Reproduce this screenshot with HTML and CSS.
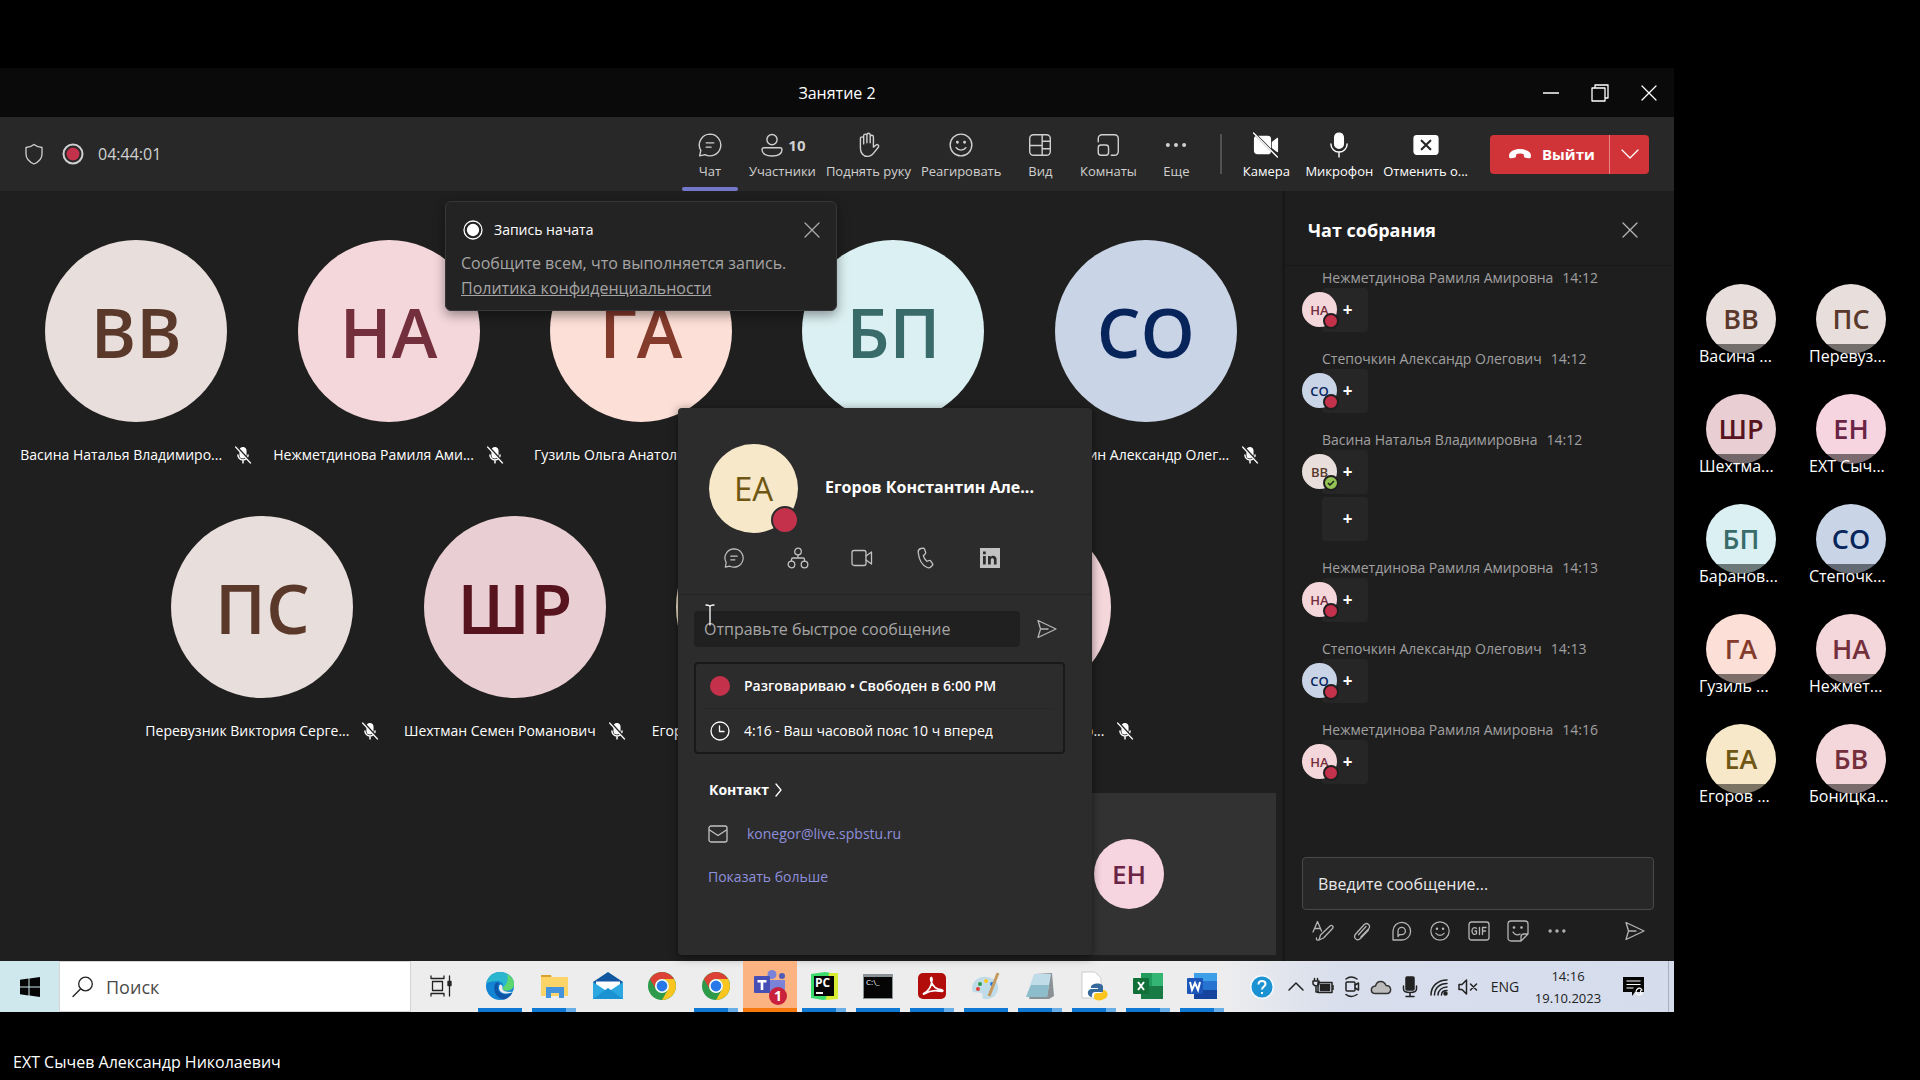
FILE: index.html
```html
<!DOCTYPE html>
<html lang="ru">
<head>
    <meta charset="UTF-8">
    <meta name="viewport" content="width=device-width, initial-scale=1.0">
    <title>Занятие 2</title>
    <link rel="stylesheet" href="styles.css">
</head>
<body>
    <svg class="sprite" aria-hidden="true">
        <symbol id="i-chat" viewBox="0 0 24 24"><path d="M12 2a10 10 0 1 1-4.6 18.9L2.5 22l1-5A10 10 0 0 1 12 2zM8.5 10h7M8.5 14h4.5"/></symbol>
        <symbol id="i-close" viewBox="0 0 16 16"><path d="M1 1l14 14M15 1L1 15"/></symbol>
        <symbol id="i-micoff" viewBox="0 0 16 16"><path class="fill" d="M5.5 4a2.5 2.5 0 0 1 5 0v4a2.5 2.5 0 0 1-5 0z"/><path d="M3.5 8a4.5 4.5 0 0 0 9 0M8 12.5V15"/><path class="cut" d="M2.500 1l13 14"/><path d="M1.5 1l13 14"/></symbol>
        <symbol id="i-smile" viewBox="0 0 24 24"><circle cx="12" cy="12" r="10"/><path d="M7.5 14.5c2 3 7 3 9 0"/><circle class="fill" cx="8.7" cy="9.5" r=".7"/><circle class="fill" cx="15.3" cy="9.5" r=".7"/></symbol>
        <symbol id="i-dots" viewBox="0 0 24 24"><circle class="fill" cx="4.5" cy="12" r="1.2"/><circle class="fill" cx="12" cy="12" r="1.2"/><circle class="fill" cx="19.5" cy="12" r="1.2"/></symbol>
        <symbol id="i-send" viewBox="0 0 20 20"><path d="M1 1.5L19 10 1 18.5 3.5 10zM3.5 10H11"/></symbol>
        <symbol id="i-chrome" viewBox="0 0 30 30"><circle class="c-green" cx="15" cy="15" r="14"/><path class="c-red" d="M2.9 8A14 14 0 0 1 27.1 8H15a7 7 0 0 0-6 10.5z"/><path class="c-yellow" d="M27.1 8A14 14 0 0 1 15 29l6-10.5A7 7 0 0 0 15 8z"/><circle class="c-white" cx="15" cy="15" r="7"/><circle class="c-blue" cx="15" cy="15" r="5.4"/></symbol>
    </svg>

    <div class="page">
        <main class="share">
            <header class="titlebar">
                <span class="window-title">Занятие 2</span>
                <div class="window-buttons">
                    <button aria-label="Свернуть"><svg class="icon s16" viewBox="0 0 16 16"><path d="M0 8h16"/></svg></button>
                    <button aria-label="Развернуть"><svg class="icon s18" viewBox="0 0 18 18"><path d="M1 4h13v13H1zM4 4V1h13v13h-3"/></svg></button>
                    <button aria-label="Закрыть"><svg class="icon s16"><use href="#i-close"/></svg></button>
                </div>
            </header>

            <div class="toolbar">
                <svg class="icon s22" viewBox="0 0 22 22"><path d="M11 1.5c2.5 2 5 3 8 3V11c0 5-3.500 8-8 10-4.500-2-8-5-8-10V4.500c3 0 5.500-1 8-3z"/></svg>
                <svg class="icon s22 rec" viewBox="0 0 22 22"><circle cx="11" cy="11" r="9.500"/><circle class="c-rec" cx="11" cy="11" r="6.500"/></svg>
                <span class="timer">04:44:01</span>
                <nav class="tools">
                    <button class="tool active"><svg class="icon s26"><use href="#i-chat"/></svg><span>Чат</span></button>
                    <button class="tool"><span class="tool-top"><svg class="icon s26" viewBox="0 0 24 24"><circle cx="12" cy="7" r="4.700"/><path d="M4.500 14.500h15a1.700 1.700 0 0 1 1.700 1.700c0 4-4 6-9.200 6s-9.200-2-9.200-6a1.700 1.700 0 0 1 1.700-1.700z"/></svg><b>10</b></span><span>Участники</span></button>
                    <button class="tool"><svg class="icon s26" viewBox="0 0 24 24"><path d="M5 13V6a1.500 1.500 0 0 1 3 0v5V3.500a1.500 1.500 0 0 1 3 0V10 2.700a1.500 1.500 0 0 1 3 0V10 4.500a1.500 1.500 0 0 1 3 0v9.500l2.500-2c1.200-1 3 .4 2.200 1.800L17.500 19c-1.300 2-3 3.500-6 3.500C7.500 22.500 5 19 5 15z"/></svg><span>Поднять руку</span></button>
                    <button class="tool"><svg class="icon s26"><use href="#i-smile"/></svg><span>Реагировать</span></button>
                    <button class="tool"><svg class="icon s26" viewBox="0 0 24 24"><rect x="2.500" y="2.500" width="19" height="19" rx="3.500"/><path d="M14 2.500v19M2.500 12.500H14M14 8.500h7.500M14 15.500h7.500"/></svg><span>Вид</span></button>
                    <button class="tool"><svg class="icon s26" viewBox="0 0 24 24"><path d="M3 9V6a3.500 3.500 0 0 1 3.500-3.500H18A3.500 3.500 0 0 1 21.500 6v12a3.500 3.500 0 0 1-3.500 3.500h-3"/><rect x="3" y="12" width="9.500" height="9.500" rx="2.500"/></svg><span>Комнаты</span></button>
                    <button class="tool"><svg class="icon s26"><use href="#i-dots"/></svg><span>Еще</span></button>
                    <span class="tool-divider"></span>
                    <button class="tool bright"><svg class="icon s26" viewBox="0 0 24 24"><rect class="fill" x="1.500" y="4" width="14.500" height="16" rx="2.500"/><path class="fill" d="M18 9.500L22.500 6v12L18 14.500z"/><path class="cut" d="M1.500 1.500l22 22"/><path d="M.5 1l22 22"/></svg><span>Камера</span></button>
                    <button class="tool bright"><svg class="icon s26" viewBox="0 0 24 24"><rect class="fill" x="8" y="1" width="8" height="14" rx="4"/><path d="M4.500 11a7.500 7.500 0 0 0 15 0M12 18.500V23"/></svg><span>Микрофон</span></button>
                    <button class="tool bright"><svg class="icon s26" viewBox="0 0 24 24"><rect class="fill" x="1" y="3.500" width="22" height="17" rx="2.500"/><path class="dark" d="M8 8l8 8M16 8l-8 8"/></svg><span>Отменить о...</span></button>
                </nav>
                <div class="leave">
                    <button class="leave-main"><svg class="s24" viewBox="0 0 24 24"><path class="c-white" d="M12 7c5.500 0 11 2.500 11 6.700 0 2-.8 2.800-2.600 2.500l-2.800-.5c-1.300-.2-1.800-.9-1.800-2.200v-1.300c-2-.9-5.600-.9-7.600 0v1.300c0 1.300-.5 2-1.800 2.200l-2.800.5C1.800 16.500 1 15.700 1 13.700 1 9.500 6.500 7 12 7z"/></svg>Выйти</button>
                    <button class="leave-more" aria-label="Другие варианты"><svg class="icon s18" viewBox="0 0 18 18"><path d="M1 5l8 8 8-8"/></svg></button>
                </div>
            </div>

            <div class="meeting">
                <section class="stage">
                    <div class="row">
                        <div class="tile"><div class="avatar big brown">ВВ</div><p class="name">Васина Наталья Владимиро...<svg class="icon s18"><use href="#i-micoff"/></svg></p></div>
                        <div class="tile"><div class="avatar big rose">НА</div><p class="name">Нежметдинова Рамиля Ами...<svg class="icon s18"><use href="#i-micoff"/></svg></p></div>
                        <div class="tile"><div class="avatar big peach">ГА</div><p class="name">Гузиль Ольга Анатольевна<svg class="icon s18"><use href="#i-micoff"/></svg></p></div>
                        <div class="tile"><div class="avatar big teal">БП</div><p class="name">Баранов...<svg class="icon s18"><use href="#i-micoff"/></svg></p></div>
                        <div class="tile"><div class="avatar big blue">СО</div><p class="name">Степочкин Александр Олег...<svg class="icon s18"><use href="#i-micoff"/></svg></p></div>
                    </div>
                    <div class="row">
                        <div class="tile"><div class="avatar big brown">ПС</div><p class="name">Перевузник Виктория Серге...<svg class="icon s18"><use href="#i-micoff"/></svg></p></div>
                        <div class="tile"><div class="avatar big wine">ШР</div><p class="name">Шехтман Семен Романович<svg class="icon s18"><use href="#i-micoff"/></svg></p></div>
                        <div class="tile"><div class="avatar big gold">ЕА</div><p class="name">Егоров Константин Алексан...<svg class="icon s18"><use href="#i-micoff"/></svg></p></div>
                        <div class="tile"><div class="avatar big rose">БВ</div><p class="name">Боницкая Валерия Викторо...<svg class="icon s18"><use href="#i-micoff"/></svg></p></div>
                    </div>
                    <div class="self"><div class="avatar medium pink">ЕН</div></div>

                    <div class="toast">
                        <div class="toast-head">
                            <svg class="icon s20" viewBox="0 0 20 20"><circle cx="10" cy="10" r="9"/><circle class="c-white" cx="10" cy="10" r="5.500"/></svg>
                            <span>Запись начата</span>
                            <button aria-label="Закрыть"><svg class="icon s16"><use href="#i-close"/></svg></button>
                        </div>
                        <p>Сообщите всем, что выполняется запись.</p>
                        <a href="#">Политика конфиденциальности</a>
                    </div>

                    <aside class="card">
                        <div class="card-head">
                            <div class="avatar large gold">ЕА<i class="presence"></i></div>
                            <h2>Егоров Константин Але...</h2>
                        </div>
                        <div class="card-actions">
                            <button aria-label="Чат"><svg class="icon s22"><use href="#i-chat"/></svg></button>
                            <button aria-label="Организация"><svg class="icon s22" viewBox="0 0 22 22"><circle cx="11" cy="4.500" r="3.300"/><circle cx="4.500" cy="17.500" r="3.300"/><circle cx="17.500" cy="17.500" r="3.300"/><path d="M11 8v3M4.500 14v-1.500q0-1.500 1.500-1.500h10q1.500 0 1.500 1.500V14"/></svg></button>
                            <button aria-label="Видеозвонок"><svg class="icon s22" viewBox="0 0 22 22"><rect x="1" y="3.500" width="14" height="15" rx="2"/><path d="M15 9l5.500-4v12L15 13"/></svg></button>
                            <button aria-label="Звонок"><svg class="icon s22" viewBox="0 0 22 22"><path d="M6 1.500l2-.3c.8 0 1.300.3 1.600 1l1 3c.2.700 0 1.300-.5 1.800L8.300 8.700c.6 2.300 1.800 4.200 3.500 5.600l2.300-.8c.7-.2 1.300 0 1.700.6l1.700 2.600c.4.600.3 1.300-.2 1.800l-1.300 1.300c-1 1-2.500 1.300-3.800.7C7.500 18.500 4 12.500 3.200 5.500 3 3.500 4.200 2 6 1.500z"/></svg></button>
                            <button aria-label="LinkedIn"><svg class="s22" viewBox="0 0 22 22"><rect class="c-light" x="1" y="1" width="20" height="20"/><path class="c-card" d="M4 9h2.800v8.500H4zM4 4.500h2.800v2.800H4zM9 9h2.600v1.200c1.600-2.300 6-1.800 6 2.300v5h-2.700V13c0-2.500-3.100-2.300-3.100 0v4.500H9z"/></svg></button>
                        </div>
                        <div class="quick">
                            <input type="text" aria-label="Быстрое сообщение" placeholder="Отправьте быстрое сообщение">
                            <button aria-label="Отправить"><svg class="icon s20"><use href="#i-send"/></svg></button>
                            <svg class="icon caret" viewBox="0 0 10 22"><path d="M1 1q4 0 4 2 0-2 4-2M5 3v18"/></svg>
                        </div>
                        <div class="status">
                            <p class="strong"><svg class="s20" viewBox="0 0 20 20"><circle class="c-rec" cx="10" cy="10" r="10"/></svg>Разговариваю • Свободен в 6:00 PM</p>
                            <p><svg class="icon s20" viewBox="0 0 20 20"><circle cx="10" cy="10" r="9"/><path d="M9.500 5v5.500H14"/></svg>4:16 - Ваш часовой пояс 10 ч вперед</p>
                        </div>
                        <h3>Контакт <svg class="icon s12" viewBox="0 0 12 16"><path d="M3 2l5 6-5 6"/></svg></h3>
                        <p class="mail"><svg class="icon s20" viewBox="0 0 20 20"><rect x="1" y="2" width="18" height="16" rx="2"/><path d="M1.500 6L10 11.500 18.500 6"/></svg><a href="#">konegor@live.spbstu.ru</a></p>
                        <a class="more" href="#">Показать больше</a>
                    </aside>
                </section>

                <aside class="chat">
                    <header class="chat-head">
                        <h2>Чат собрания</h2>
                        <button aria-label="Закрыть"><svg class="icon s16"><use href="#i-close"/></svg></button>
                    </header>
                    <div class="messages">
                        <div class="message"><p>Нежметдинова Рамиля Амировна<time>14:12</time></p><div class="bubble"><div class="avatar small rose">НА<i class="presence"></i></div>+</div></div>
                        <div class="message"><p>Степочкин Александр Олегович<time>14:12</time></p><div class="bubble"><div class="avatar small blue">СО<i class="presence"></i></div>+</div></div>
                        <div class="message"><p>Васина Наталья Владимировна<time>14:12</time></p><div class="bubble"><div class="avatar small brown">ВВ<i class="presence online"><svg viewBox="0 0 12 12"><path d="M3 6l2 2 4-4"/></svg></i></div>+</div><div class="bubble">+</div></div>
                        <div class="message"><p>Нежметдинова Рамиля Амировна<time>14:13</time></p><div class="bubble"><div class="avatar small rose">НА<i class="presence"></i></div>+</div></div>
                        <div class="message"><p>Степочкин Александр Олегович<time>14:13</time></p><div class="bubble"><div class="avatar small blue">СО<i class="presence"></i></div>+</div></div>
                        <div class="message"><p>Нежметдинова Рамиля Амировна<time>14:16</time></p><div class="bubble"><div class="avatar small rose">НА<i class="presence"></i></div>+</div></div>
                    </div>
                    <div class="composer">
                        <input type="text" aria-label="Сообщение" placeholder="Введите сообщение...">
                        <div class="composer-tools">
                            <button aria-label="Формат"><svg class="icon s22" viewBox="0 0 22 22"><path d="M1 12L5.500 1.500 9.500 11M2.500 8.500h6M7 20l1.500-5L18 6c2-1.500 4 .5 2.500 2.500L11.500 18 7 20zM7 20c-1.500.5-3 0-2.500-2"/></svg></button>
                            <button aria-label="Вложить"><svg class="icon s22" viewBox="0 0 22 22"><path d="M17.500 10l-7.800 8.300c-3.700 3.700-8-.8-5-4.300L13 4.800c3-3.200 7.500.8 4.700 4L9.800 17M15 6.500l-7.500 8.200"/></svg></button>
                            <button aria-label="Loop"><svg class="icon s22" viewBox="0 0 22 22"><path d="M3 20V11a8.800 8.800 0 1 1 8.500 9H3M8 15.500V11a3.700 3.700 0 1 1 3.700 3.700H9.500L8 16.500"/></svg></button>
                            <button aria-label="Смайлик"><svg class="icon s22"><use href="#i-smile"/></svg></button>
                            <button aria-label="GIF"><svg class="icon s22" viewBox="0 0 22 22"><rect x="1" y="2" width="20" height="18" rx="2.500"/><path d="M8.500 8.300C6 6.500 4 8.500 4 11s2 4.500 4.500 2.800V11H7M11.500 7.500v7M14.500 14.500v-7H18M14.500 11h3"/></svg></button>
                            <button aria-label="Наклейка"><svg class="icon s22" viewBox="0 0 22 22"><path d="M14 21H4a3 3 0 0 1-3-3V4a3 3 0 0 1 3-3h14a3 3 0 0 1 3 3v10zM14 21v-4a3 3 0 0 1 3-3h4M6 12c1.500 3 5 3.500 7 2"/><circle class="fill" cx="7" cy="7.500" r=".7"/><circle class="fill" cx="14.500" cy="7.500" r=".7"/></svg></button>
                            <button aria-label="Еще"><svg class="icon s22"><use href="#i-dots"/></svg></button>
                            <button class="send" aria-label="Отправить"><svg class="icon s20"><use href="#i-send"/></svg></button>
                        </div>
                    </div>
                </aside>
            </div>

            <footer class="taskbar">
                <button class="start" aria-label="Пуск"><svg class="s20" viewBox="0 0 20 20"><path class="c-black" d="M0 2.800l8.500-1.200v7.900H0zM9.500 1.500L20 0v9.500H9.500zM0 10.500h8.500v7.900L0 17.200zM9.500 10.500H20V20L9.500 18.500z"/></svg></button>
                <label class="search"><svg class="icon s22" viewBox="0 0 22 22"><circle cx="13.500" cy="8" r="6.800"/><path d="M8.700 12.800L1 20.500"/></svg><input type="text" placeholder="Поиск" aria-label="Поиск"></label>
                <button class="app view" aria-label="Представление задач"><svg class="icon s22" viewBox="0 0 22 22"><path d="M1 1v2.500h13V1M1 21v-2.500h13V21M2.500 6.500h10v9h-10zM19.500 1v20"/><rect class="fill" x="18" y="6.500" width="3" height="4"/></svg></button>
                <button class="app run solo" aria-label="Edge"><svg class="s30" viewBox="0 0 30 30"><circle class="e-base" cx="15" cy="15" r="14"/><path class="e-top" d="M1.500 12.500C3 5 8.500 1 15 1c8 0 14 5.500 14 12 0 4-3 6.500-7 6.500-3 0-5-1-4-3 1-3-1-6.500-6-6.500-4 0-8 1-10.500 2.500z"/><path class="e-mint" d="M22 3c4.500 2.500 7 6 7 10 0 4-3 6.500-7 6.500-3 0-5-1-4-3 4-3 6-8 4-13.500z"/><path class="e-dark" d="M11.500 11.500C7 15 9 27 19 28.500c4-1 7-4 8-6.500-6 3-14 1-14-5 0-2 .5-4 1.500-4.500-.5-.8-1.500-1.200-3-1z"/><path class="c-task" d="M15 13.500c-2.500 3.500-.5 9 6 9 3 0 5.500-.7 7-1.700-3 .4-11.500.2-10.500-4.300.6-1.500-1-3-2.500-3z"/></svg></button>
                <button class="app run" aria-label="Проводник"><svg class="s30" viewBox="0 0 30 30"><path class="f-tab" d="M2 4h10l1 4H2z"/><path class="f-body" d="M2 6h27v19H2z"/><path class="f-front" d="M7 16h18v11h-5v-5h-8v5H7z"/></svg></button>
                <button class="app" aria-label="Почта"><svg class="s30" viewBox="0 0 30 30"><path class="m-back" d="M0 11L15 1l15 10v7H0z"/><path class="c-white" d="M3 10.500h24v8H3z"/><path class="m-left" d="M0 11l15 10L30 11v17H0z"/><path class="m-fold" d="M0 28l15-11 15 11z"/></svg></button>
                <button class="app" aria-label="Chrome"><svg class="s30"><use href="#i-chrome"/></svg></button>
                <button class="app run" aria-label="Chrome"><svg class="s30"><use href="#i-chrome"/></svg></button>
                <button class="app teams" aria-label="Teams"><svg class="s32" viewBox="0 0 32 32"><circle class="t-light" cx="18" cy="5.500" r="4.500"/><circle class="t-mid" cx="28" cy="7" r="3"/><path class="t-light" d="M11 11h20v8c0 5-4 8-9 8s-9-4-11-8z"/><rect class="t-dark" x="0" y="7" width="16" height="17" rx="1"/><path class="c-white" d="M3.500 11h9v2.500H9.300V21H6.700v-7.500H3.500z"/></svg><b class="badge">1</b></button>
                <button class="app run" aria-label="PyCharm"><svg class="s30" viewBox="0 0 30 30"><path class="p-green" d="M2 3l14-2 12 2-1 24-13 2L2 27z"/><path class="p-yellow" d="M20 2l9 0v26l-12 1z"/><rect class="c-black" x="5" y="5" width="20" height="20"/><rect class="c-white" x="7" y="21" width="7" height="2"/><text class="c-white" x="6" y="16">PC</text></svg></button>
                <button class="app run solo" aria-label="Командная строка"><svg class="s30" viewBox="0 0 30 30"><rect class="c-grey" x="0" y="3" width="30" height="25"/><rect class="c-black" x="1" y="6" width="28" height="21"/><text class="c-white tiny" x="3" y="14">C:\_</text></svg></button>
                <button class="app run" aria-label="Acrobat"><svg class="s30 acro" viewBox="0 0 30 30"><rect x="1" y="2" width="28" height="26" rx="5"/><path d="M6 23c6-3 9-9 9-15-.5-3-2-1-1 2 2 6 5 8 11 9 2 1 0 2-3 1-5-1-10 0-15 3z"/></svg></button>
                <button class="app run solo" aria-label="Paint"><svg class="s30" viewBox="0 0 30 30"><path class="n-sheet" d="M1 18C1 10 8 5 16 6c7 1 12 5 11 12s-7 11-14 10c-3-1 0-5-3-6s-9 1-9-4z"/><circle class="c-green" cx="9" cy="13" r="2"/><circle class="c-yellow" cx="15" cy="10" r="2"/><circle class="c-red" cx="7" cy="18" r="2"/><circle class="c-blue" cx="21" cy="13" r="2"/><path class="brush" d="M27 2L18 25"/></svg></button>
                <button class="app run" aria-label="Блокнот"><svg class="s30" viewBox="0 0 30 30"><path class="c-grey" d="M10 3l17-1 2 23-5 3H4z"/><path class="n-sheet" d="M9 3h17l-4 23H1z"/><path class="n-shade" d="M6 14h18l-2 12H1z"/></svg></button>
                <button class="app run" aria-label="Python"><svg class="s30" viewBox="0 0 30 30"><path class="c-white edge" d="M3 1h13l6 6v20H3z"/><path class="y-blue" d="M12 16c0-4 12-5 12 0v5h-8c-3 0-3 3-3 5-5 0-6-8 0-8h6v-1h-7z"/><path class="c-yellow" d="M24 19c6 0 6 8 1 9-2 2-10 2-10-1v-2c0-2 1-3 3-3h4c2 0 2-2 2-3z"/></svg></button>
                <button class="app run" aria-label="Excel"><svg class="s30" viewBox="0 0 30 30"><rect class="x-light" x="8" y="2" width="22" height="26"/><path class="x-mid" d="M8 2h11v13H8z"/><path class="x-deep" d="M8 15h22v13H8z"/><rect class="x-dark" x="0" y="7" width="16" height="16" rx="1"/><path class="mark" d="M5 11l6 8M11 11l-6 8"/></svg></button>
                <button class="app run" aria-label="Word"><svg class="s30" viewBox="0 0 30 30"><rect class="w-light" x="7" y="2" width="23" height="9"/><rect class="w-mid" x="7" y="10" width="23" height="9"/><rect class="w-deep" x="7" y="19" width="23" height="9"/><rect class="w-dark" x="0" y="7" width="16" height="16" rx="1"/><path class="mark" d="M3 11l2 8 3-7 3 7 2-8"/></svg></button>
                <div class="tray">
                    <svg class="s24 help" viewBox="0 0 24 24"><circle class="halo" cx="12" cy="12" r="12"/><circle class="m-fold" cx="12" cy="12" r="10.500"/><path class="mark" d="M8.500 9.500c0-5 7-4.500 7-.5 0 2.500-3.500 2.500-3.500 5.500M12 17v2"/></svg>
                    <svg class="icon s18" viewBox="0 0 18 18"><path d="M2 12l7-7 7 7"/></svg>
                    <svg class="icon s22" viewBox="0 0 22 22"><rect x="6" y="6.500" width="14" height="10"/><rect class="fill" x="8.500" y="8.500" width="9" height="6"/><path d="M21 9.500v4M1 5h6v3q-3 4-6 0zM2.500 2.500V5M5.500 2.500V5M4 10v6h2"/></svg>
                    <svg class="icon s22" viewBox="0 0 22 22"><rect x="5" y="6" width="9" height="9" rx="1"/><path d="M14 9l3.500-2v7L14 12M5 3q5-4 11 0M5 18.500q5 4 11 0"/></svg>
                    <svg class="icon s22 cloud" viewBox="0 0 22 22"><path d="M5.500 17.500C0 17.500 0 10.500 5.500 10 7 4 14 4 16 9.500c6 0 6 8 1 8z"/></svg>
                    <svg class="icon s22" viewBox="0 0 22 22"><rect class="fill" x="7" y="1" width="8" height="13" rx="1"/><path d="M4.500 10v3q0 3.500 6.500 3.500t6.500-3.500v-3M11 17v3.500M7 20.500h8"/></svg>
                    <svg class="icon s22" viewBox="0 0 22 22"><path d="M3 19C3 10 10 4 19 4M6.500 19C6.500 12 12 7.500 19 7.500M10 19c0-4.500 4-8 9-8M13.500 19c0-3 2.500-4.500 5.500-4.500"/><circle class="fill" cx="17.500" cy="17.500" r="1.500"/></svg>
                    <svg class="icon s22" viewBox="0 0 22 22"><path d="M2 8.500h3L9.500 4v14L5 13.500H2zM13.500 8l6 6M19.500 8l-6 6"/></svg>
                    <span class="lang">ENG</span>
                    <span class="clock"><span>14:16</span><span>19.10.2023</span></span>
                    <svg class="s24 notify" viewBox="0 0 24 24"><path class="c-black" d="M2 2h21v15h-9l-3 4v-4H2z"/><path class="mark thin" d="M5.500 6h14M5.500 9.500h14M5.500 13h7M15 17c0-3 4-6 6-2-2 0-2 3 0 3-1 3-6 2-6-1z"/></svg>
                </div>
            </footer>
        </main>

        <aside class="strip">
            <div class="mini"><div class="avatar mid brown">ВВ</div><span>Васина ...</span></div>
            <div class="mini"><div class="avatar mid brown">ПС</div><span>Перевуз...</span></div>
            <div class="mini"><div class="avatar mid wine">ШР</div><span>Шехтма...</span></div>
            <div class="mini"><div class="avatar mid pink">ЕН</div><span>EXT Сыч...</span></div>
            <div class="mini"><div class="avatar mid teal">БП</div><span>Баранов...</span></div>
            <div class="mini"><div class="avatar mid blue">СО</div><span>Степочк...</span></div>
            <div class="mini"><div class="avatar mid peach">ГА</div><span>Гузиль ...</span></div>
            <div class="mini"><div class="avatar mid rose">НА</div><span>Нежмет...</span></div>
            <div class="mini"><div class="avatar mid gold">ЕА</div><span>Егоров ...</span></div>
            <div class="mini"><div class="avatar mid rose">БВ</div><span>Боницка...</span></div>
        </aside>
    </div>
    <p class="presenter">EXT Сычев Александр Николаевич</p>
</body>
</html>
```
FILE: styles.css
```css
* {
    box-sizing: border-box;
}
body {
    margin: 0;
    min-height: 100vh;
    background: #000;
    color: #fff;
    font-family: "Open Sans", "Noto Sans", sans-serif;
    font-size: 14px;
    line-height: 20px;
}
p, h2, h3 {
    margin: 0;
}
button {
    padding: 0;
    border: none;
    background: none;
    color: inherit;
    font: inherit;
    cursor: pointer;
}
input {
    font: inherit;
    outline: none;
}
svg {
    display: block;
    flex: none;
}
.sprite {
    position: absolute;
    width: 0;
    height: 0;
}

/* icons */
.icon {
    fill: none;
    stroke: currentColor;
    stroke-width: 1.3;
    stroke-linecap: round;
    stroke-linejoin: round;
}
.fill { fill: currentColor; }
.s12 { width: 12px; height: 16px; }
.s16 { width: 16px; height: 16px; }
.s18 { width: 18px; height: 18px; }
.s20 { width: 20px; height: 20px; }
.s22 { width: 22px; height: 22px; }
.s24 { width: 24px; height: 24px; }
.s26 { width: 26px; height: 26px; }
.s30 { width: 30px; height: 30px; }
.s32 { width: 32px; height: 32px; }
.cut { stroke: #292828; stroke-width: 2; }
.dark { stroke: #292828; stroke-width: 2; }
.mark { fill: none; stroke: #fff; stroke-width: 2; }
.thin { stroke-width: 1.2; }
.c-rec { fill: #c4314b; stroke: none; }
.c-white { fill: #fff; }
.c-light { fill: #c2c2c2; }
.c-card { fill: #2d2c2c; }
.c-black { fill: #050505; }
.c-grey { fill: #8b9296; }
.c-task { fill: #ededee; }
.c-red { fill: #dd4034; }
.c-green { fill: #2d9b49; }
.c-yellow { fill: #fbc51f; }
.c-blue { fill: #2878e8; }

/* avatars */
.avatar {
    display: flex;
    align-items: center;
    justify-content: center;
    border-radius: 50%;
    position: relative;
}
.big { width: 182px; height: 182px; font-size: 69px; font-weight: 600; }
.large { width: 89px; height: 89px; font-size: 33px; }
.mid { width: 70px; height: 70px; font-size: 27px; font-weight: 600; }
.medium { width: 70px; height: 70px; font-size: 26px; font-weight: 600; }
.small { width: 35px; height: 35px; font-size: 13px; font-weight: 600; }
.brown { background: #e8dedb; color: #5a392b; }
.rose { background: #f4d7db; color: #742f3c; }
.peach { background: #fcdfd7; color: #843b2c; }
.teal { background: #dbf0f2; color: #386b69; }
.blue { background: #c9d5e7; color: #07245b; }
.wine { background: #e9cfd3; color: #57141f; }
.gold { background: #f6e8c9; color: #6f5713; }
.pink { background: #f6d4e0; color: #6a2444; }
.presence {
    position: absolute;
    right: -1px;
    bottom: -1px;
    width: 28px;
    height: 28px;
    border: 2px solid #2d2c2c;
    border-radius: 50%;
    background: #c4314b;
}
.small .presence {
    right: -2px;
    bottom: -2px;
    width: 16px;
    height: 16px;
    border-color: #1f1e1f;
}
.presence.online {
    background: #92c353;
}
.online svg {
    fill: none;
    stroke: #1f1e1f;
    stroke-width: 1.5;
}

/* layout */
.page {
    display: flex;
    align-items: flex-start;
    padding-top: 68px;
}
.share {
    flex: 1;
    min-width: 0;
}
.titlebar {
    display: flex;
    align-items: center;
    justify-content: center;
    height: 49px;
    background: #0a0a0a;
    position: relative;
}
.window-title {
    font-size: 16px;
}
.window-buttons {
    position: absolute;
    right: 16px;
    display: flex;
    gap: 31px;
}
.window-buttons button {
    width: 18px;
    height: 18px;
    display: grid;
    place-items: center;
}

/* toolbar */
.toolbar {
    display: flex;
    align-items: center;
    height: 74px;
    padding: 0 25px 0 23px;
    background: #292828;
    color: #d0d0d0;
}
.rec {
    margin-left: 17px;
    stroke-width: 2;
}
.timer {
    margin-left: 14px;
    font-size: 16px;
}
.tools {
    display: flex;
    height: 100%;
    margin-left: auto;
    margin-right: 17px;
}
.tool {
    display: flex;
    flex-direction: column;
    align-items: center;
    min-width: 68px;
    padding: 15px 5px 0;
    font-size: 13px;
    position: relative;
}
.tool > span:last-child {
    margin-top: 3px;
}
.tool-top {
    display: flex;
    align-items: center;
    gap: 3px;
}
.tool-top b {
    font-size: 15px;
    font-weight: 700;
}
.tool.active::after {
    content: "";
    position: absolute;
    left: 6px;
    right: 6px;
    bottom: 0;
    height: 4px;
    border-radius: 2px;
    background: #7478cb;
}
.tool.bright {
    color: #fff;
}
.tool-divider {
    width: 2px;
    height: 40px;
    margin: 17px 10px;
    background: #525151;
}
.leave {
    display: flex;
    height: 39px;
    border-radius: 4px;
    background: #d13438;
    color: #fff;
    overflow: hidden;
}
.leave-main {
    display: flex;
    align-items: center;
    gap: 10px;
    width: 119px;
    padding-left: 18px;
    font-size: 15px;
    font-weight: 700;
}
.leave-more {
    display: grid;
    place-items: center;
    width: 40px;
    border-left: 1px solid #e88487;
}

/* meeting */
.meeting {
    display: flex;
}
.stage {
    flex: 1;
    min-width: 0;
    padding: 0 10px 6px;
    background: #201f1f;
    position: relative;
}
.row {
    display: flex;
    justify-content: center;
}
.tile {
    display: flex;
    flex-direction: column;
    align-items: center;
    width: 20%;
    height: 276px;
    padding-top: 49px;
}
.name {
    display: flex;
    align-items: center;
    gap: 12px;
    margin-top: 23px;
    white-space: nowrap;
}
.self {
    display: grid;
    place-items: center;
    width: 294px;
    height: 162px;
    margin: 50px -4px 0 auto;
    background: #333232;
}
.toast {
    position: absolute;
    top: 10px;
    left: 445px;
    width: 392px;
    height: 110px;
    padding: 16px 15px;
    border: 1px solid #383737;
    border-radius: 6px;
    background: #242323;
    box-shadow: 0 4px 12px rgba(0, 0, 0, 0.4);
    color: #a5a5a5;
    font-size: 16px;
    line-height: 25px;
}
.toast-head {
    display: flex;
    align-items: center;
    margin-bottom: 9px;
    padding-left: 2px;
    color: #fff;
    font-size: 14px;
    line-height: 24px;
}
.toast-head span {
    margin-left: 11px;
}
.toast-head button {
    margin-left: auto;
    margin-right: 1px;
    color: #aaa;
}
.toast a {
    color: #a5a5a5;
}

/* profile card */
.card {
    position: absolute;
    top: 217px;
    left: 678px;
    width: 414px;
    height: 547px;
    padding: 36px 27px 0 16px;
    border-radius: 4px;
    background: #2d2c2c;
    box-shadow: 0 2px 10px rgba(0, 0, 0, 0.5);
}
.card-head {
    display: flex;
    align-items: center;
    gap: 27px;
    padding-left: 15px;
}
.card h2 {
    padding-bottom: 4px;
    font-size: 16px;
    font-weight: 700;
    white-space: nowrap;
}
.card-actions {
    display: flex;
    gap: 42px;
    margin: 0 -27px 0 -16px;
    padding: 14px 0 25px 45px;
    border-bottom: 1px solid #262525;
    color: #c2c2c2;
}
.quick {
    display: flex;
    align-items: center;
    gap: 17px;
    margin: 16px 0 15px;
    position: relative;
}
.quick input {
    width: 326px;
    height: 36px;
    padding: 0 10px;
    border: none;
    border-radius: 4px;
    background: #212020;
    color: #fff;
    font-size: 16px;
}
.quick input::placeholder {
    color: #a5a5a5;
    opacity: 1;
}
.quick button {
    color: #b5b5b5;
}
.caret {
    position: absolute;
    left: 11px;
    top: -7px;
    width: 10px;
    height: 22px;
}
.status {
    height: 92px;
    padding: 0 9px;
    border: 2px solid #1a1919;
    border-radius: 4px;
}
.status p {
    display: flex;
    align-items: center;
    gap: 14px;
    height: 44px;
    padding-left: 5px;
    white-space: nowrap;
}
.status p + p {
    border-top: 1px solid #282727;
}
.status .strong {
    font-weight: 600;
}
.card h3 {
    display: flex;
    gap: 4px;
    align-items: center;
    margin: 26px 0 0 15px;
    font-size: 14px;
    font-weight: 700;
}
.mail {
    display: flex;
    align-items: center;
    gap: 19px;
    margin: 24px 0 23px 14px;
}
.mail svg {
    color: #c2c2c2;
}
.card a {
    color: #8d90dc;
    text-decoration: none;
}
.more {
    margin-left: 14px;
}

/* chat */
.chat {
    display: flex;
    flex-direction: column;
    width: 392px;
    border-left: 3px solid #191819;
    background: #1f1e1f;
}
.chat-head {
    display: flex;
    align-items: center;
    justify-content: space-between;
    height: 75px;
    padding: 4px 36px 0 23px;
    border-bottom: 1px solid #191819;
}
.chat-head h2 {
    font-size: 18px;
    font-weight: 700;
}
.chat-head button {
    color: #b5b5b5;
}
.messages {
    flex: 1;
    padding: 2px 20px 0 37px;
}
.message {
    margin-bottom: 17px;
}
.message p {
    color: #a0a0a0;
    white-space: nowrap;
}
.message time {
    margin-left: 9px;
}
.bubble {
    display: flex;
    align-items: center;
    justify-content: center;
    width: 46px;
    height: 44px;
    padding-left: 5px;
    border-radius: 4px;
    background: #272627;
    font-size: 17px;
    font-weight: 700;
    position: relative;
}
.bubble + .bubble {
    margin-top: 3px;
}
.bubble .small {
    position: absolute;
    left: -20px;
    top: 4px;
}
.composer {
    padding: 0 20px 19px 17px;
}
.composer input {
    width: 100%;
    height: 53px;
    padding: 0 15px;
    border: 1px solid #4a494a;
    border-radius: 4px;
    background: #282728;
    color: #fff;
    font-size: 16px;
}
.composer input::placeholder {
    color: #e8e8e8;
    opacity: 1;
}
.composer-tools {
    display: flex;
    gap: 17px;
    margin-top: 10px;
    padding: 0 9px 0 10px;
    color: #b5b5b5;
}
.composer-tools .send {
    margin-left: auto;
}

/* taskbar */
.taskbar {
    display: flex;
    height: 51px;
    background: linear-gradient(90deg, #ededee 0, #ededee 73%, #d8deec 80%, #d5dcec 100%);
    color: #222;
}
.start {
    display: grid;
    place-items: center;
    width: 59px;
    background: #cfe8ee;
}
.search {
    display: flex;
    align-items: center;
    gap: 12px;
    width: 352px;
    padding-left: 12px;
    border: 1px solid #d5d5d5;
    background: #fff;
}
.search input {
    width: 250px;
    padding: 0;
    border: none;
    background: none;
    font-size: 18px;
}
.search input::placeholder {
    color: #4b4b4b;
    opacity: 1;
}
.app {
    display: grid;
    place-items: center;
    width: 54px;
    padding-bottom: 2px;
    position: relative;
}
.app.view {
    margin: 0 5px 0 3px;
}
.run::after {
    content: "";
    position: absolute;
    left: 5px;
    right: 5px;
    bottom: 0;
    height: 4px;
    background: linear-gradient(90deg, #0f78d2 78%, #6aaee8 78%);
}
.solo::after {
    background: #0f78d2;
}
.teams {
    background: #fab381;
    border-bottom: 4px solid #f7780c;
    padding-bottom: 0;
}
.badge {
    position: absolute;
    right: 10px;
    bottom: 3px;
    width: 18px;
    height: 18px;
    border-radius: 50%;
    background: #c9203c;
    color: #fff;
    font-size: 14px;
    line-height: 18px;
}
.app text {
    font-size: 12px;
    font-weight: 700;
}
.app .tiny {
    font-size: 8px;
    font-weight: 400;
}
.e-base { fill: #1384d4; }
.e-top { fill: #2bb6cf; }
.e-mint { fill: #5ed66e; }
.e-dark { fill: #0d55a6; }
.f-tab { fill: #d9a32b; }
.f-body { fill: #fcd468; }
.f-front { fill: #4393dd; }
.m-back { fill: #1257a0; }
.m-left { fill: #2ba7e2; }
.m-fold { fill: #1b93d2; }
.t-light { fill: #7b83d8; }
.t-mid { fill: #5059b8; }
.t-dark { fill: #474fb5; }
.p-green { fill: #3bdc6c; }
.p-yellow { fill: #d9ec34; }
.acro rect { fill: #b20d0b; }
.acro path { fill: none; stroke: #fff; stroke-width: 1.8; }
.n-sheet { fill: #bfdce8; }
.n-shade { fill: #8dbccb; }
.brush { stroke: #c49a61; stroke-width: 3; }
.edge { stroke: #ccc; }
.y-blue { fill: #36699c; }
.x-light { fill: #35b573; }
.x-mid { fill: #219c5c; }
.x-deep { fill: #187a44; }
.x-dark { fill: #107038; }
.w-light { fill: #3d9fe8; }
.w-mid { fill: #2674cf; }
.w-deep { fill: #15439d; }
.w-dark { fill: #1b56b8; }
.halo { fill: #f5f8fc; }
.cloud path { fill: #bbb; stroke: #333; }
.tray {
    display: flex;
    align-items: center;
    gap: 7px;
    margin-left: auto;
    margin-right: 5px;
    padding-right: 23px;
    border-right: 1px solid #a9afbd;
}
.tray .icon {
    stroke-width: 1.5;
}
.help {
    margin-right: 6px;
}
.lang {
    width: 38px;
    text-align: center;
}
.clock {
    display: flex;
    flex-direction: column;
    width: 74px;
    text-align: center;
    font-size: 13px;
    line-height: 22px;
    white-space: nowrap;
}
.notify {
    margin-left: 9px;
}

/* participants strip */
.strip {
    display: grid;
    grid-template-columns: 88px 88px;
    gap: 22px;
    width: 246px;
    padding: 216px 0 0 23px;
}
.mini {
    height: 88px;
    position: relative;
    overflow: hidden;
}
.mini .avatar {
    margin-left: 9px;
}
.mini span {
    position: absolute;
    left: 0;
    right: 0;
    bottom: 4px;
    height: 24px;
    padding-left: 2px;
    background: rgba(0, 0, 0, 0.5);
    font-size: 16px;
    line-height: 24px;
    white-space: nowrap;
}
.presenter {
    margin: 39px 0 0 13px;
    font-size: 16px;
    line-height: 22px;
}
```
